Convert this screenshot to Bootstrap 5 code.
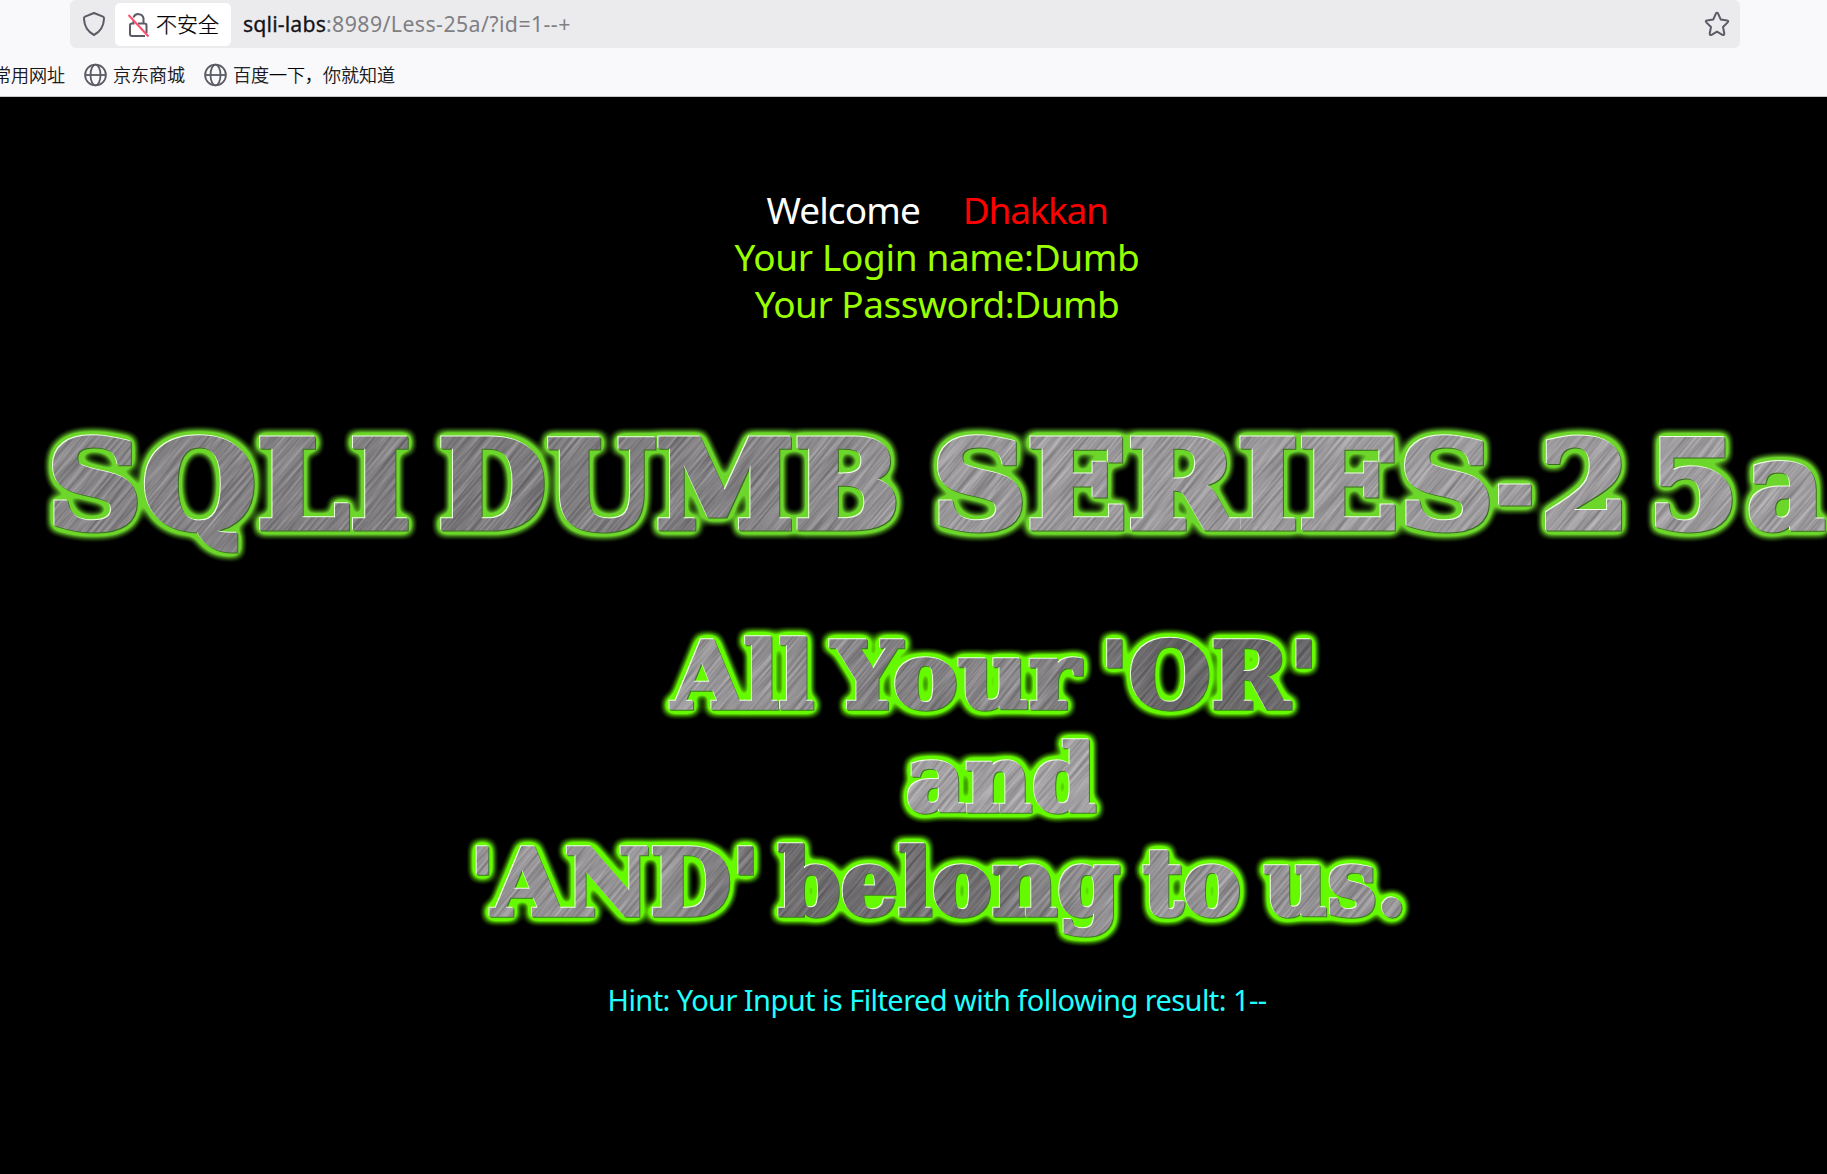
<!DOCTYPE html>
<html lang="zh-CN">
<head>
<meta charset="utf-8">
<title>Less-25a</title>
<link href="https://cdn.jsdelivr.net/npm/bootstrap@5.3.0/dist/css/bootstrap.min.css" rel="stylesheet">
<style>
body{background:#000;overflow:hidden;height:1174px;font-family:"Noto Sans","Noto Sans CJK SC",sans-serif}
.chrome-top{background:#f9f9fb;height:97px;border-bottom:1px solid #c8c8ca;color:#000;font-family:"Noto Sans CJK SC",sans-serif;font-weight:300}
.safe-chip,.marks{-webkit-text-stroke:.25px #000}
.url-box{height:48px;margin-left:70px;width:1670px;background:#ebebed;border-radius:6px;padding:0 10px 0 12px}
.safe-chip{height:43px;width:116px;background:#fff;border-radius:5px;margin-left:9px;padding-left:12px;font-size:21px}
.safe-chip svg{margin-right:6px}
.url-text{font-family:"Noto Sans",sans-serif;font-weight:400;font-size:21.3px;color:#7f7f84;margin-left:12px;white-space:pre;letter-spacing:.42px}
.url-text b{font-weight:400;color:#15141a;letter-spacing:.12px;-webkit-text-stroke:.3px #15141a}
.marks{height:48px;font-size:18px;white-space:nowrap;margin-left:-7px;padding-top:5px}
.mark-item{margin-left:19px}
.mark-item svg{margin-right:6px}
.welcome{padding:89px 0 0 47px;font-size:37px;line-height:47px;letter-spacing:-.35px;color:#9f0;height:272px}
.hi{color:#fff;margin-right:43px;letter-spacing:-.9px}.who{color:#f00;letter-spacing:-1.3px}
.pass{letter-spacing:-.5px}
.hint{padding-left:47px;font-size:29px;line-height:40px;letter-spacing:-.57px;color:#2ff}
.banner{font-family:"DejaVu Serif",serif;font-weight:700}
</style>
<script src="https://cdn.jsdelivr.net/npm/bootstrap@5.3.0/dist/js/bootstrap.bundle.min.js"></script>
</head>
<body>
<header class="chrome-top">
  <div class="url-box d-flex align-items-center">
    <svg width="24" height="26" viewBox="0 0 24 26" fill="none" stroke="#5b5b66" stroke-width="2" stroke-linejoin="round"><path d="M12 2 L21 5.6 Q22.3 6.2 22 8 Q21.5 19 12 24 Q2.500 19 2 8 Q1.700 6.200 3 5.600Z"/></svg>
    <div class="safe-chip d-flex align-items-center">
      <svg width="23" height="27" viewBox="0 0 23 27" fill="none" stroke="#5b5b66" stroke-width="2"><path d="M6.500 6.500 A5.200 5.200 0 0 1 16.500 7.500 V12 M11 12.500 H17.500 Q19.500 12.500 19.500 14.500 V22 M18 25 H5 Q3 25 3 23 V14.500 Q3 12.500 5 12.500 H6.500 V10"/><path d="M1.500 4 L21.500 25.500" stroke="#ff4f6e"/></svg>
      <span>不安全</span>
    </div>
    <div class="url-text flex-grow-1"><b>sqli-labs</b><span>:8989/Less-25a/?id=1--+</span></div>
    <svg width="26" height="26" viewBox="0 0 26 26" fill="none" stroke="#5b5b66" stroke-width="2" stroke-linejoin="round"><path d="M11.900 2.600 Q13 1 14.100 2.600 L16.800 8.600 L23 9.400 Q25 10 23.700 11.400 L19 16 L20.300 22.500 Q20.300 24.600 18.400 23.800 L13 20.700 L7.600 23.800 Q5.700 24.600 5.700 22.500 L7 16 L2.300 11.400 Q1 10 3 9.400 L9.200 8.600Z"/></svg>
  </div>
  <nav class="marks d-flex align-items-center">
    <span>常用网址</span>
    <span class="mark-item d-flex align-items-center"><svg width="23" height="24" viewBox="0 0 23 24" fill="none" stroke="#5b5b66" stroke-width="1.800"><circle cx="11.500" cy="12" r="10.400"/><ellipse cx="11.500" cy="12" rx="5" ry="10.400"/><path d="M1 12H22"/></svg>京东商城</span>
    <span class="mark-item d-flex align-items-center"><svg width="23" height="24" viewBox="0 0 23 24" fill="none" stroke="#5b5b66" stroke-width="1.800"><circle cx="11.500" cy="12" r="10.400"/><ellipse cx="11.500" cy="12" rx="5" ry="10.400"/><path d="M1 12H22"/></svg>百度一下，你就知道</span>
  </nav>
</header>
<main>
  <section class="welcome text-center">
    <div><span class="hi">Welcome</span><span class="who">Dhakkan</span></div>
    <div>Your Login name:Dumb</div>
    <div class="pass">Your Password:Dumb</div>
  </section>
  <svg class="banner d-block" width="1827" height="231" viewBox="0 369 1827 231" font-size="122">
    <defs>
      <filter id="brushed" x="0" y="0" width="100%" height="100%" color-interpolation-filters="sRGB">
        <feTurbulence type="fractalNoise" baseFrequency="0.014 0.38" numOctaves="3" seed="7"/>
        <feColorMatrix values=".42 0 0 0 .36  .42 0 0 0 .35  .42 0 0 0 .36  0 0 0 0 1"/>
      </filter>
      <linearGradient id="shade1"><stop offset="0" stop-color="#000" stop-opacity=".04"/><stop offset=".25" stop-color="#000" stop-opacity=".14"/><stop offset=".4" stop-color="#000" stop-opacity=".1"/><stop offset=".53" stop-color="#fff" stop-opacity=".08"/><stop offset="1" stop-color="#fff" stop-opacity=".12"/></linearGradient>
      <pattern id="metal1" patternUnits="userSpaceOnUse" width="1827" height="1174">
        <rect x="-1200" y="-400" width="3400" height="2600" transform="rotate(-50 900 500)" filter="url(#brushed)"/>
        <rect width="1827" height="1174" fill="url(#shade1)"/>
      </pattern>
      <filter id="glow1" filterUnits="userSpaceOnUse" x="0" y="380" width="1827" height="210" color-interpolation-filters="sRGB">
        <feMorphology in="SourceAlpha" operator="dilate" radius="2"/>
        <feGaussianBlur stdDeviation="4.600"/>
        <feComponentTransfer result="halo"><feFuncA type="linear" slope="3" intercept="-.1"/></feComponentTransfer>
        <feFlood flood-color="#6cd62a"/><feComposite in2="halo" operator="in" result="green"/>
        <feOffset in="SourceAlpha" dx="-1.200" dy="-1.200" result="up"/><feFlood flood-color="#f2ffe8"/><feComposite in2="up" operator="in" result="light"/>
        <feOffset in="SourceAlpha" dx="1" dy="1" result="down"/><feFlood flood-color="#3d6b25"/><feComposite in2="down" operator="in" result="dark"/>
        <feMerge><feMergeNode in="green"/><feMergeNode in="dark"/><feMergeNode in="light"/><feMergeNode in="SourceGraphic"/></feMerge>
      </filter>
    </defs>
    <g fill="url(#metal1)" stroke="url(#metal1)" stroke-width="5" filter="url(#glow1)">
      <text x="47" y="528" textLength="364" lengthAdjust="spacingAndGlyphs">SQLI</text>
      <text x="438" y="528" textLength="462" lengthAdjust="spacingAndGlyphs">DUMB</text>
      <text x="932" y="528" textLength="562" lengthAdjust="spacingAndGlyphs">SERIES</text>
      <text x="1496" y="528" textLength="38" lengthAdjust="spacingAndGlyphs">-</text>
      <text x="1540" y="528" textLength="90" lengthAdjust="spacingAndGlyphs">2</text>
      <text x="1648" y="528" textLength="91" lengthAdjust="spacingAndGlyphs">5</text>
      <text x="1747" y="528" textLength="78" lengthAdjust="spacingAndGlyphs">a</text>
    </g>
  </svg>
  <svg class="banner d-block" width="1827" height="380" viewBox="0 600 1827 380" font-size="91">
    <defs>
      <linearGradient id="shade2"><stop offset=".25" stop-color="#fff" stop-opacity=".05"/><stop offset=".37" stop-color="#fff" stop-opacity=".08"/><stop offset=".49" stop-color="#000" stop-opacity=".12"/><stop offset=".56" stop-color="#000" stop-opacity=".06"/><stop offset=".64" stop-color="#000" stop-opacity=".3"/><stop offset=".7" stop-color="#000" stop-opacity=".26"/></linearGradient>
      <linearGradient id="shade3"><stop offset=".3" stop-color="#fff" stop-opacity=".03"/><stop offset=".42" stop-color="#000" stop-opacity=".26"/><stop offset=".54" stop-color="#000" stop-opacity=".22"/><stop offset=".64" stop-color="#fff" stop-opacity=".03"/></linearGradient>
      <pattern id="metal2" patternUnits="userSpaceOnUse" width="1827" height="1174">
        <rect x="-1200" y="-400" width="3400" height="2600" transform="rotate(-50 900 500)" filter="url(#brushed)"/>
        <rect y="600" width="1827" height="130" fill="url(#shade2)"/>
        <rect y="730" width="1827" height="94" fill="#fff" opacity=".15"/>
        <rect y="824" width="1827" height="140" fill="url(#shade3)"/>
      </pattern>
      <filter id="glow2" filterUnits="userSpaceOnUse" x="400" y="600" width="1060" height="370" color-interpolation-filters="sRGB">
        <feMorphology in="SourceAlpha" operator="dilate" radius="2"/>
        <feGaussianBlur stdDeviation="4.600"/>
        <feComponentTransfer result="halo"><feFuncA type="linear" slope="3.200" intercept="-.1"/></feComponentTransfer>
        <feFlood flood-color="#66fa00"/><feComposite in2="halo" operator="in" result="green"/>
        <feOffset in="SourceAlpha" dx="-1.100" dy="-1.100" result="up"/><feFlood flood-color="#f2ffe8"/><feComposite in2="up" operator="in" result="light"/>
        <feOffset in="SourceAlpha" dx="1" dy="1" result="down"/><feFlood flood-color="#3f7a25"/><feComposite in2="down" operator="in" result="dark"/>
        <feMerge><feMergeNode in="green"/><feMergeNode in="dark"/><feMergeNode in="light"/><feMergeNode in="SourceGraphic"/></feMerge>
      </filter>
    </defs>
    <g fill="url(#metal2)" stroke="url(#metal2)" stroke-width="3.500" filter="url(#glow2)">
      <text x="672" y="708" textLength="142" lengthAdjust="spacingAndGlyphs">All</text>
      <text x="832" y="708" textLength="248" lengthAdjust="spacingAndGlyphs">Your</text>
      <text x="1100" y="708" textLength="218" lengthAdjust="spacingAndGlyphs">'OR'</text>
      <text x="906" y="811" textLength="190" lengthAdjust="spacingAndGlyphs">and</text>
      <text x="471" y="915" textLength="23" lengthAdjust="spacingAndGlyphs">'</text>
      <text x="492" y="915" textLength="268" lengthAdjust="spacingAndGlyphs">AND'</text>
      <text x="778" y="915" textLength="342" lengthAdjust="spacingAndGlyphs">belong</text>
      <text x="1143" y="915" textLength="98" lengthAdjust="spacingAndGlyphs">to</text>
      <text x="1264" y="915" textLength="143" lengthAdjust="spacingAndGlyphs">us.</text>
    </g>
  </svg>
  <div class="hint text-center">Hint: Your Input is Filtered with following result: 1--</div>
</main>
</body>
</html>
